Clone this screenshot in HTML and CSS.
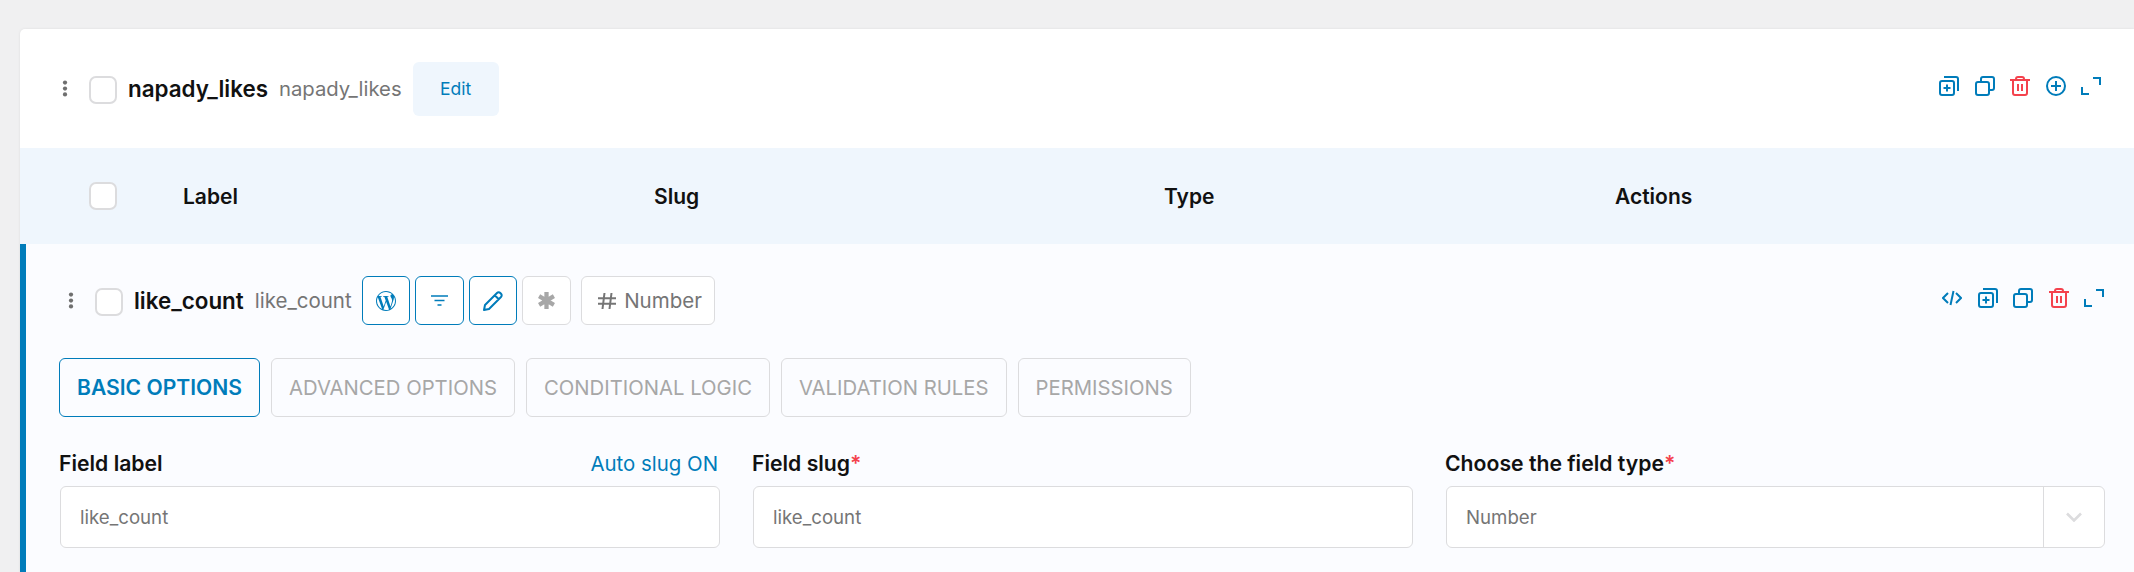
FILE: index.html
```html
<!DOCTYPE html>
<html lang="en">
<head>
<meta charset="utf-8">
<title>Field group</title>
<link rel="stylesheet" href="styles.css">
</head>
<body>
<svg class="defs" width="0" height="0" aria-hidden="true">
  <defs>
    <symbol id="i-addmany" viewBox="0 0 20 20"><rect x="1" y="5" width="14" height="14" rx="2" fill="none" stroke="currentColor" stroke-width="2"/><path d="M5 1h12a2 2 0 0 1 2 2v12M8 8.500v7M4.500 12h7" fill="none" stroke="currentColor" stroke-width="2"/></symbol>
    <symbol id="i-copy" viewBox="0 0 20 20"><rect x="1" y="6" width="13" height="13" rx="2" fill="none" stroke="currentColor" stroke-width="2"/><path d="M6 6V3a2 2 0 0 1 2-2h9a2 2 0 0 1 2 2v9a2 2 0 0 1-2 2h-3" fill="none" stroke="currentColor" stroke-width="2"/></symbol>
    <symbol id="i-trash" viewBox="0 0 20 20"><path d="M0 4h20M6 4V3a2 2 0 0 1 2-2h4a2 2 0 0 1 2 2v1M3 4v13a2 2 0 0 0 2 2h10a2 2 0 0 0 2-2V4M8 8v7M12 8v7" fill="none" stroke="currentColor" stroke-width="2"/></symbol>
    <symbol id="i-plus" viewBox="0 0 20 20"><circle cx="10" cy="10" r="9" fill="none" stroke="currentColor" stroke-width="2"/><path d="M10 5v10M5 10h10" fill="none" stroke="currentColor" stroke-width="2"/></symbol>
    <symbol id="i-expand" viewBox="0 0 20 20"><path d="M12 2h7v7M1 11v7h7" fill="none" stroke="currentColor" stroke-width="2"/></symbol>
    <symbol id="i-code" viewBox="0 0 20 20"><path d="M6 5l-5 5 5 5M14 5l5 5-5 5M11.500 3l-3 14" fill="none" stroke="currentColor" stroke-width="2"/></symbol>
    <symbol id="i-dots" viewBox="0 0 6 20"><circle cx="3" cy="3" r="2.500"/><circle cx="3" cy="10" r="2.500"/><circle cx="3" cy="17" r="2.500"/></symbol>
  </defs>
</svg>
<main class="card">
  <header class="group-head">
    <div class="title-side">
      <svg class="dots"><use href="#i-dots"/></svg>
      <span class="check"></span>
      <strong class="group-name">napady_likes</strong>
      <span class="group-slug">napady_likes</span>
      <button class="edit-btn">Edit</button>
    </div>
    <div class="actions">
      <svg class="icon"><use href="#i-addmany"/></svg>
      <svg class="icon"><use href="#i-copy"/></svg>
      <svg class="icon danger"><use href="#i-trash"/></svg>
      <svg class="icon"><use href="#i-plus"/></svg>
      <svg class="icon"><use href="#i-expand"/></svg>
    </div>
  </header>

  <div class="table-head">
    <span class="check"></span>
    <div class="cols">
      <span>Label</span>
      <span>Slug</span>
      <span>Type</span>
      <span>Actions</span>
    </div>
  </div>

  <section class="field-row">
    <div class="field-head">
      <div class="title-side">
        <svg class="dots"><use href="#i-dots"/></svg>
        <span class="check"></span>
        <strong class="field-name">like_count</strong>
        <span class="field-slug">like_count</span>
        <div class="badges">
          <span class="badge active">
            <svg viewBox="0 0 24 24" class="badge-icon"><path fill="currentColor" d="M21.469 6.825c.84 1.537 1.318 3.3 1.318 5.175 0 3.979-2.156 7.456-5.363 9.325l3.295-9.527c.615-1.54.82-2.771.82-3.864 0-.405-.026-.78-.07-1.11m-7.981.105c.647-.03 1.232-.105 1.232-.105.582-.075.514-.93-.067-.899 0 0-1.755.135-2.88.135-1.064 0-2.85-.15-2.85-.15-.585-.03-.661.855-.075.885 0 0 .54.061 1.125.09l1.68 4.605-2.37 7.08L5.354 6.9c.649-.03 1.234-.1 1.234-.1.585-.075.516-.93-.065-.896 0 0-1.746.138-2.874.138-.2 0-.438-.008-.69-.015C4.911 3.15 8.235 1.215 12 1.215c2.809 0 5.365 1.072 7.286 2.833-.046-.003-.091-.009-.141-.009-1.06 0-1.812.923-1.812 1.914 0 .89.513 1.643 1.06 2.531.411.72.89 1.643.89 2.977 0 .915-.354 1.994-.821 3.479l-1.075 3.585-3.9-11.61.001.014zM12 22.784c-1.059 0-2.081-.153-3.048-.437l3.237-9.406 3.315 9.087c.024.053.05.101.078.149-1.12.393-2.325.609-3.582.609M1.211 12c0-1.564.336-3.05.935-4.39L7.29 21.709C3.694 19.96 1.212 16.271 1.211 12M12 0C5.385 0 0 5.385 0 12s5.385 12 12 12 12-5.385 12-12S18.615 0 12 0"/></svg>
          </span>
          <span class="badge active">
            <svg viewBox="0 0 17 11" class="badge-icon filter"><path d="M0 1h17M3.500 5.500h10M6.500 10h4" fill="none" stroke="currentColor" stroke-width="1.700"/></svg>
          </span>
          <span class="badge active">
            <svg viewBox="0 0 20 20" class="badge-icon"><path d="M1 19l1-5L14 2a2.300 2.300 0 0 1 3.300 0l.7.700a2.300 2.300 0 0 1 0 3.300L6 18zM12 4.500l3.500 3.500" fill="none" stroke="currentColor" stroke-width="2" stroke-linejoin="round"/></svg>
          </span>
          <span class="badge muted">
            <svg viewBox="0 0 20 20" class="badge-icon star"><path d="M10 1v18M2.200 5.500l15.600 9M17.800 5.500l-15.600 9" fill="none" stroke="currentColor" stroke-width="4.500"/></svg>
          </span>
          <span class="type-tag">
            <svg viewBox="0 0 18 16" class="hash"><path d="M6.500 0L4.500 16M13.500 0l-2 16M0 5.300h18M0 10.700h18" fill="none" stroke="currentColor" stroke-width="2"/></svg>
            Number
          </span>
        </div>
      </div>
      <div class="actions">
        <svg class="icon"><use href="#i-code"/></svg>
        <svg class="icon"><use href="#i-addmany"/></svg>
        <svg class="icon"><use href="#i-copy"/></svg>
        <svg class="icon danger"><use href="#i-trash"/></svg>
        <svg class="icon"><use href="#i-expand"/></svg>
      </div>
    </div>

    <nav class="tabs">
      <span class="tab current">BASIC OPTIONS</span>
      <span class="tab">ADVANCED OPTIONS</span>
      <span class="tab">CONDITIONAL LOGIC</span>
      <span class="tab">VALIDATION RULES</span>
      <span class="tab">PERMISSIONS</span>
    </nav>

    <div class="form-grid">
      <div class="form-col">
        <div class="label-line">
          <label>Field label</label>
          <span class="auto-slug">Auto slug ON</span>
        </div>
        <div class="input">like_count</div>
      </div>
      <div class="form-col">
        <div class="label-line">
          <label>Field slug<span class="req">*</span></label>
        </div>
        <div class="input">like_count</div>
      </div>
      <div class="form-col">
        <div class="label-line">
          <label>Choose the field type<span class="req">*</span></label>
        </div>
        <div class="input select">
          <span class="select-value">Number</span>
          <span class="select-arrow">
            <svg viewBox="0 0 16 10" class="chevron"><path d="M1 1.500l7 7 7-7" fill="none" stroke="currentColor" stroke-width="2.600"/></svg>
          </span>
        </div>
      </div>
    </div>
  </section>
</main>
</body>
</html>
```
FILE: styles.css
```css
* { box-sizing: border-box; }
html, body { margin: 0; height: 572px; overflow: hidden; }
body {
  background: #f0f0f1;
  padding: 29px 0 0 20px;
  font-family: Inter, "Liberation Sans", sans-serif;
  color: #111;
}
.defs { display: block; height: 0; }
.card {
  background: #fff;
  border-radius: 5px 0 0 0;
  box-shadow: 0 0 3px rgba(0, 0, 0, .08);
  min-height: 560px;
  overflow: hidden;
}
.group-head {
  height: 119px;
  display: flex;
  align-items: center;
  justify-content: space-between;
  padding: 0 33px 0 41px;
}
.title-side { display: flex; align-items: center; }
.dots { width: 8px; height: 17px; fill: #6f6f6f; flex: none; }
.check {
  width: 28px;
  height: 28px;
  flex: none;
  background: #fff;
  border: 2px solid #dcdcde;
  border-radius: 7px;
}
.group-head .check { margin: 3px 0 0 20px; }
.group-name { font-size: 22.4px; font-weight: 600; margin-left: 11px; }
.group-slug { font-size: 20.3px; color: #757575; margin-left: 11px; }
.edit-btn {
  width: 86px;
  height: 54px;
  margin-left: 11px;
  border: 0;
  border-radius: 6px;
  background: #eff6fd;
  color: #007cba;
  font: 400 17.5px Inter, "Liberation Sans", sans-serif;
}
.actions { display: flex; gap: 15.5px; margin-bottom: 5px; }
.icon { width: 20px; height: 20px; color: #007cba; flex: none; }
.icon.danger { color: #f4424d; }
.table-head {
  height: 96px;
  background: #eff6fd;
  display: flex;
  align-items: center;
  padding-left: 69px;
}
.cols {
  flex: 1;
  display: grid;
  grid-template-columns: 471px 510px 451px 1fr;
  margin-left: 66px;
  font-size: 21px;
  font-weight: 600;
}
.field-row {
  background: #fbfcff;
  border-left: 6px solid #007cba;
  padding: 32px 30px 40px 33px;
  min-height: 320px;
}
.field-head {
  height: 49px;
  display: flex;
  align-items: center;
  justify-content: space-between;
}
.field-head .title-side { margin-left: 8px; }
.field-head .check { margin: 3px 0 0 20px; }
.field-name { font-size: 22.4px; font-weight: 600; margin-left: 11px; }
.field-slug { font-size: 20.5px; color: #757575; margin-left: 11px; }
.badges { display: flex; gap: 5px; margin-left: 10px; }
.badge {
  width: 48.5px;
  height: 49px;
  display: flex;
  align-items: center;
  justify-content: center;
  background: #fff;
  border: 1.5px solid #dcdcde;
  border-radius: 6px;
}
.badge.active { border-color: #007cba; color: #007cba; }
.badge.muted { color: #a7a7a7; }
.badge-icon { width: 20px; height: 20px; }
.badge-icon.filter { width: 17px; height: 11px; }
.badge-icon.star { width: 19px; height: 19px; }
.type-tag {
  height: 49px;
  margin-left: 5.5px;
  padding: 0 12px 0 16px;
  display: flex;
  align-items: center;
  gap: 8px;
  background: #fff;
  border: 1.5px solid #dcdcde;
  border-radius: 6px;
  color: #757575;
  font-size: 20.5px;
}
.hash { width: 18px; height: 16px; }
.tabs { display: flex; gap: 11px; margin-top: 33px; }
.tab {
  height: 59px;
  padding: 0 17px;
  display: flex;
  align-items: center;
  border: 1.5px solid #dcdcde;
  border-radius: 6px;
  color: #a7a7a7;
  font-size: 20.3px;
  font-weight: 400;
}
.tab.current {
  border-color: #007cba;
  color: #007cba;
  font-size: 21.1px;
  font-weight: 600;
}
.form-grid {
  display: grid;
  grid-template-columns: 660px 660px 659px;
  gap: 33px;
  margin-top: 31px;
  padding-left: 1px;
}
.label-line {
  height: 30px;
  display: flex;
  justify-content: space-between;
  align-items: center;
  margin-bottom: 8px;
  padding-right: 2px;
}
label { font-size: 21.2px; font-weight: 600; margin-left: -1px; }
.req { color: #f4424d; }
.auto-slug { font-size: 20.4px; color: #007cba; }
.input {
  height: 62px;
  display: flex;
  align-items: center;
  padding: 0 19px;
  background: #fff;
  border: 1.5px solid #dcdcde;
  border-radius: 6px;
  color: #757575;
  font-size: 18.67px;
}
.select { padding: 0 0 0 19px; }
.select-value { flex: 1; }
.select-arrow {
  width: 61px;
  height: 100%;
  display: flex;
  align-items: center;
  justify-content: center;
  border-left: 1.5px solid #dcdcde;
  color: #dcdcde;
}
.chevron { width: 16px; height: 10px; }
```
